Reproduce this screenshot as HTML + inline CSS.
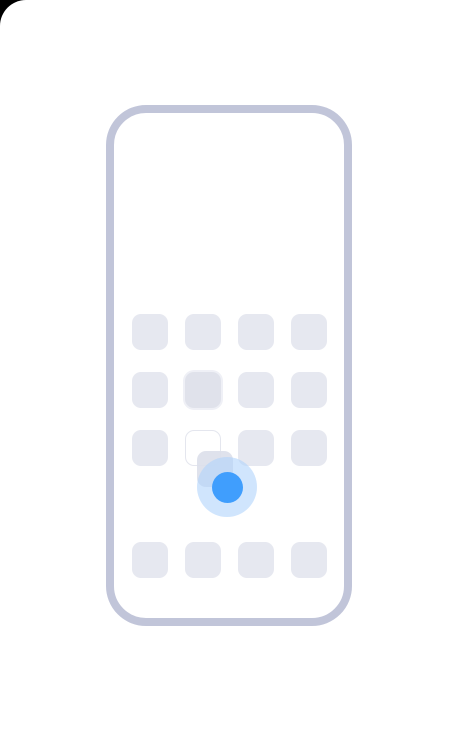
<!DOCTYPE html>
<html><head><meta charset="utf-8"><style>
html,body{margin:0;padding:0;background:#000;}
body{width:459px;height:732px;overflow:hidden;position:relative;}
.page{position:absolute;left:0;top:0;width:459px;height:732px;background:#fff;border-top-left-radius:26px;}
.phone{position:absolute;left:106px;top:105px;width:230px;height:505px;border:8px solid #c1c5d9;border-radius:40px;}
.i{position:absolute;width:36px;height:36px;border-radius:9px;background:#e6e8f0;}
.dark{background:#e0e2eb;box-shadow:0 0 0 2px #eff0f6;}
.empty{background:#fff;border:1px solid #e4e6ee;width:34px;height:34px;}
.drag{background:rgba(220,223,234,0.9);}
.ring{position:absolute;left:197px;top:457px;width:60px;height:60px;border-radius:50%;background:rgba(176,212,252,0.6);}
.dot{position:absolute;left:212px;top:472px;width:31px;height:31px;border-radius:50%;background:#409efd;}
</style></head><body>
<div class="page">
<div class="phone"></div>
<div class="i" style="left:132px;top:314px"></div>
<div class="i" style="left:185px;top:314px"></div>
<div class="i" style="left:238px;top:314px"></div>
<div class="i" style="left:291px;top:314px"></div>
<div class="i" style="left:132px;top:372px"></div>
<div class="i dark" style="left:185px;top:372px"></div>
<div class="i" style="left:238px;top:372px"></div>
<div class="i" style="left:291px;top:372px"></div>
<div class="i" style="left:132px;top:430px"></div>
<div class="i empty" style="left:185px;top:430px"></div>
<div class="i" style="left:238px;top:430px"></div>
<div class="i" style="left:291px;top:430px"></div>
<div class="i drag" style="left:197px;top:451px"></div>
<div class="ring"></div>
<div class="dot"></div>
<div class="i" style="left:132px;top:542px"></div>
<div class="i" style="left:185px;top:542px"></div>
<div class="i" style="left:238px;top:542px"></div>
<div class="i" style="left:291px;top:542px"></div>
</div>
</body></html>
